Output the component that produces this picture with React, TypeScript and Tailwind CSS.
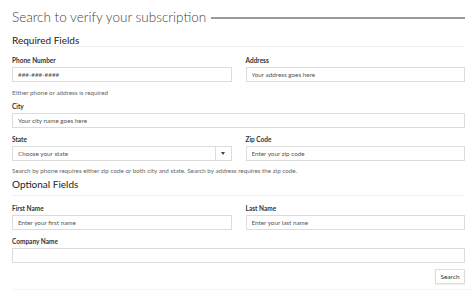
import React from "react";

const Label: React.FC<{ children: React.ReactNode }> = ({ children }) => (
  <label className="block text-[6.5px] font-bold text-[#333] leading-[8px] mb-[2px]">{children}</label>
);

const Input: React.FC<{ placeholder?: string }> = ({ placeholder }) => (
  <input
    placeholder={placeholder}
    className="block w-full h-[15px] border border-[#dcdcdc] bg-white px-[5px] text-[6.3px] text-[#333] placeholder:text-[#555] outline-none"
  />
);

const App: React.FC = () => {
  return (
    <div
      className="relative w-[474px] h-[290px] bg-white overflow-hidden pl-[12px] pr-[9px] pt-[6px] text-[#333]"
      style={{ fontFamily: "Lato, 'Open Sans', sans-serif" }}
    >
      {/* Title */}
      <div className="flex items-center gap-[5px]">
        <h1 className="text-[13.5px] font-light text-[#444] leading-[22px] whitespace-nowrap">
          Search to verify your subscription
        </h1>
        <div className="flex-1 h-[2px] bg-[#9a9a9a] mt-[1px]" />
      </div>

      {/* Required */}
      <h2 className="mt-[6px] text-[10px] text-[#222] leading-[12px]">Required Fields</h2>
      <div className="h-px bg-[#eeeeee]" />

      <div className="mt-[10px] grid grid-cols-2 gap-[14px]">
        <div>
          <Label>Phone Number</Label>
          <Input placeholder="###-###-####" />
        </div>
        <div>
          <Label>Address</Label>
          <Input placeholder="Your address goes here" />
        </div>
      </div>
      <p className="mt-[7px] text-[6.3px] text-[#666] leading-[8px]">Either phone or address is required</p>

      <div className="mt-[6px]">
        <Label>City</Label>
        <Input placeholder="Your city name goes here" />
      </div>

      <div className="mt-[8px] grid grid-cols-2 gap-[14px]">
        <div>
          <Label>State</Label>
          <div className="flex h-[15px] border border-[#dcdcdc] bg-white">
            <div className="flex-1 px-[5px] text-[6.3px] text-[#555] leading-[13px]">Choose your state</div>
            <div className="w-[16px] border-l border-[#dcdcdc] flex items-center justify-center">
              <svg width="4" height="3" viewBox="0 0 4 3">
                <path d="M0 0 L4 0 L2 3 Z" fill="#444" />
              </svg>
            </div>
          </div>
        </div>
        <div>
          <Label>Zip Code</Label>
          <Input placeholder="Enter your zip code" />
        </div>
      </div>
      <p className="mt-[6px] text-[6.3px] text-[#666] leading-[8px]">
        Search by phone requires either zip code or both city and state. Search by address requires the zip code.
      </p>

      {/* Optional */}
      <h2 className="mt-[3px] text-[10px] text-[#222] leading-[12px]">Optional Fields</h2>
      <div className="mt-[5px] h-px bg-[#eeeeee]" />

      <div className="mt-[9px] grid grid-cols-2 gap-[14px]">
        <div>
          <Label>First Name</Label>
          <Input placeholder="Enter your first name" />
        </div>
        <div>
          <Label>Last Name</Label>
          <Input placeholder="Enter your last name" />
        </div>
      </div>
      <div className="mt-[8px]">
        <Label>Company Name</Label>
        <Input />
      </div>
      <div className="mt-[6px] flex justify-end">
        <button className="h-[15px] w-[30px] border border-[#dcdcdc] bg-white text-[6.5px] text-[#333] leading-[13px] shadow-[0_1px_1px_rgba(0,0,0,0.06)]">
          Search
        </button>
      </div>
      <div className="absolute left-[12px] right-0 bottom-0 h-[1px] bg-[#eef8fc]" />
    </div>
  );
};

export default App;
